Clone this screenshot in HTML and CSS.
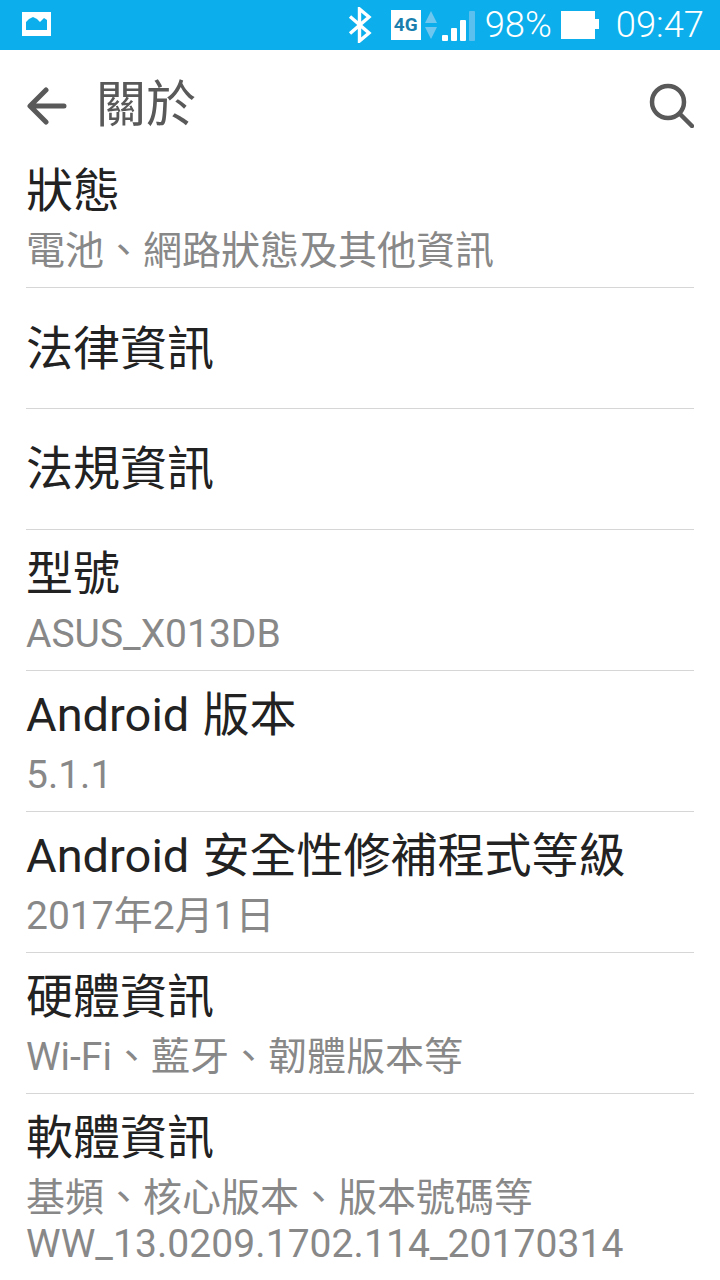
FILE: index.html
```html
<!DOCTYPE html>
<html lang="zh-Hant">
<head>
<meta charset="utf-8">
<title>關於</title>
<link rel="stylesheet" href="styles.css">
</head>
<body>
<div class="status">
  <svg class="pic" width="30" height="24" viewBox="0 0 30 24"><path fill-rule="evenodd" fill="#fff" d="M0 0H29V24H0ZM4 18H25V8L22 6 18 10 15 7 11 5 7 7 4 10Z"/></svg>
  <span class="status-right">
    <svg width="24" height="36" viewBox="0 0 24 36"><path fill="none" stroke="#fff" stroke-width="3.4" d="M2 9.500 21 26 11.500 34V2L21 10 2 26.500"/></svg>
    <span class="lte">4G</span>
    <svg class="arrows" width="14" height="28" viewBox="0 0 14 28"><path fill="#6fc6ee" d="M7 0 13 12H1ZM7 28 1 16H13Z"/></svg>
    <svg class="signal" width="33" height="32" viewBox="0 0 33 32"><rect x="0" y="25" width="6" height="6" rx="1" fill="#fff"/><rect x="9" y="18" width="6" height="13" rx="1" fill="#fff"/><rect x="18" y="10" width="6" height="21" rx="1" fill="#fff"/><rect x="27" y="1" width="6" height="30" rx="1" fill="#5cc0ef"/></svg>
    <span class="clock pct">98%</span>
    <svg class="batt" width="39" height="28" viewBox="0 0 39 28"><path fill="#fff" d="M1 0H35V8H39V18H35V28H1Z"/></svg>
    <span class="clock">09:47</span>
  </span>
</div>
<div class="bar">
  <svg class="back" width="40" height="38" viewBox="0 0 40 38"><path fill="none" stroke="#595959" stroke-width="5" stroke-linecap="round" stroke-linejoin="round" d="M37 19H4M19 3 3 19 19 35"/></svg>
  <span class="bar-title">關於</span>
  <svg class="search" width="46" height="46" viewBox="0 0 46 46"><circle cx="20" cy="20" r="16" fill="none" stroke="#595959" stroke-width="4.500"/><path stroke="#595959" stroke-width="4.500" stroke-linecap="round" d="M32 32 44 44"/></svg>
</div>
<div class="list">
  <div class="row first"><div class="t">狀態</div><div class="s">電池、網路狀態及其他資訊</div></div>
  <div class="row short"><div class="t">法律資訊</div></div>
  <div class="row short third"><div class="t">法規資訊</div></div>
  <div class="row"><div class="t">型號</div><div class="s">ASUS_X013DB</div></div>
  <div class="row"><div class="t">Android 版本</div><div class="s">5.1.1</div></div>
  <div class="row"><div class="t">Android 安全性修補程式等級</div><div class="s">2017年2月1日</div></div>
  <div class="row"><div class="t">硬體資訊</div><div class="s">Wi-Fi、藍牙、韌體版本等</div></div>
  <div class="row last"><div class="t">軟體資訊</div><div class="s">基頻、核心版本、版本號碼等<br><span class="code">WW_13.0209.1702.114_20170314</span></div></div>
</div>
</body>
</html>
```
FILE: styles.css
```css
html, body { margin: 0; padding: 0; background: #fff; }
body { width: 720px; height: 1280px; overflow: hidden; font-family: Roboto, "Noto Sans CJK TC", sans-serif; }
.status { height: 50px; background: #0cafeb; display: flex; align-items: center; justify-content: space-between; padding: 0 16px 0 22px; box-sizing: border-box; color: #fff; }
.pic { margin-top: -2px; }
.status-right { display: flex; align-items: center; }
.lte { width: 30px; height: 30px; background: #fff; color: #1a7fae; font-size: 19px; font-weight: 700; line-height: 30px; text-align: center; margin-left: 19px; }
.arrows { margin-left: 3px; }
.signal { margin-left: 4px; margin-top: 2px; }
.clock { font-size: 36.300px; line-height: 50px; font-weight: 300; }
.pct { margin-left: 10px; }
.batt { margin: 0 17px 0 8px; }
.bar { height: 100px; display: flex; align-items: center; padding: 0 26px 0 27px; }
.back { margin-top: 12px; }
.bar-title { font-size: 50px; color: #595959; margin-left: 29px; flex: 1; line-height: 100px; margin-top: 10px; }
.search { margin-top: 10px; }
.list { padding: 0 26px; }
.row { height: 141px; box-sizing: border-box; border-bottom: 1px solid #d6d6d6; padding-top: 14px; }
.row.first { height: 138px; padding-top: 11px; }
.row.short { height: 121px; padding-top: 31px; }
.row.short.third { padding-top: 30px; }
.row.last { border-bottom: 0; }
.t { font-size: 47px; line-height: 60px; color: #222; white-space: nowrap; word-spacing: 1.500px; }
.s { font-size: 39px; line-height: 46px; color: #888; white-space: nowrap; margin-top: 7px; }
.code { letter-spacing: 0.070px; }
```
